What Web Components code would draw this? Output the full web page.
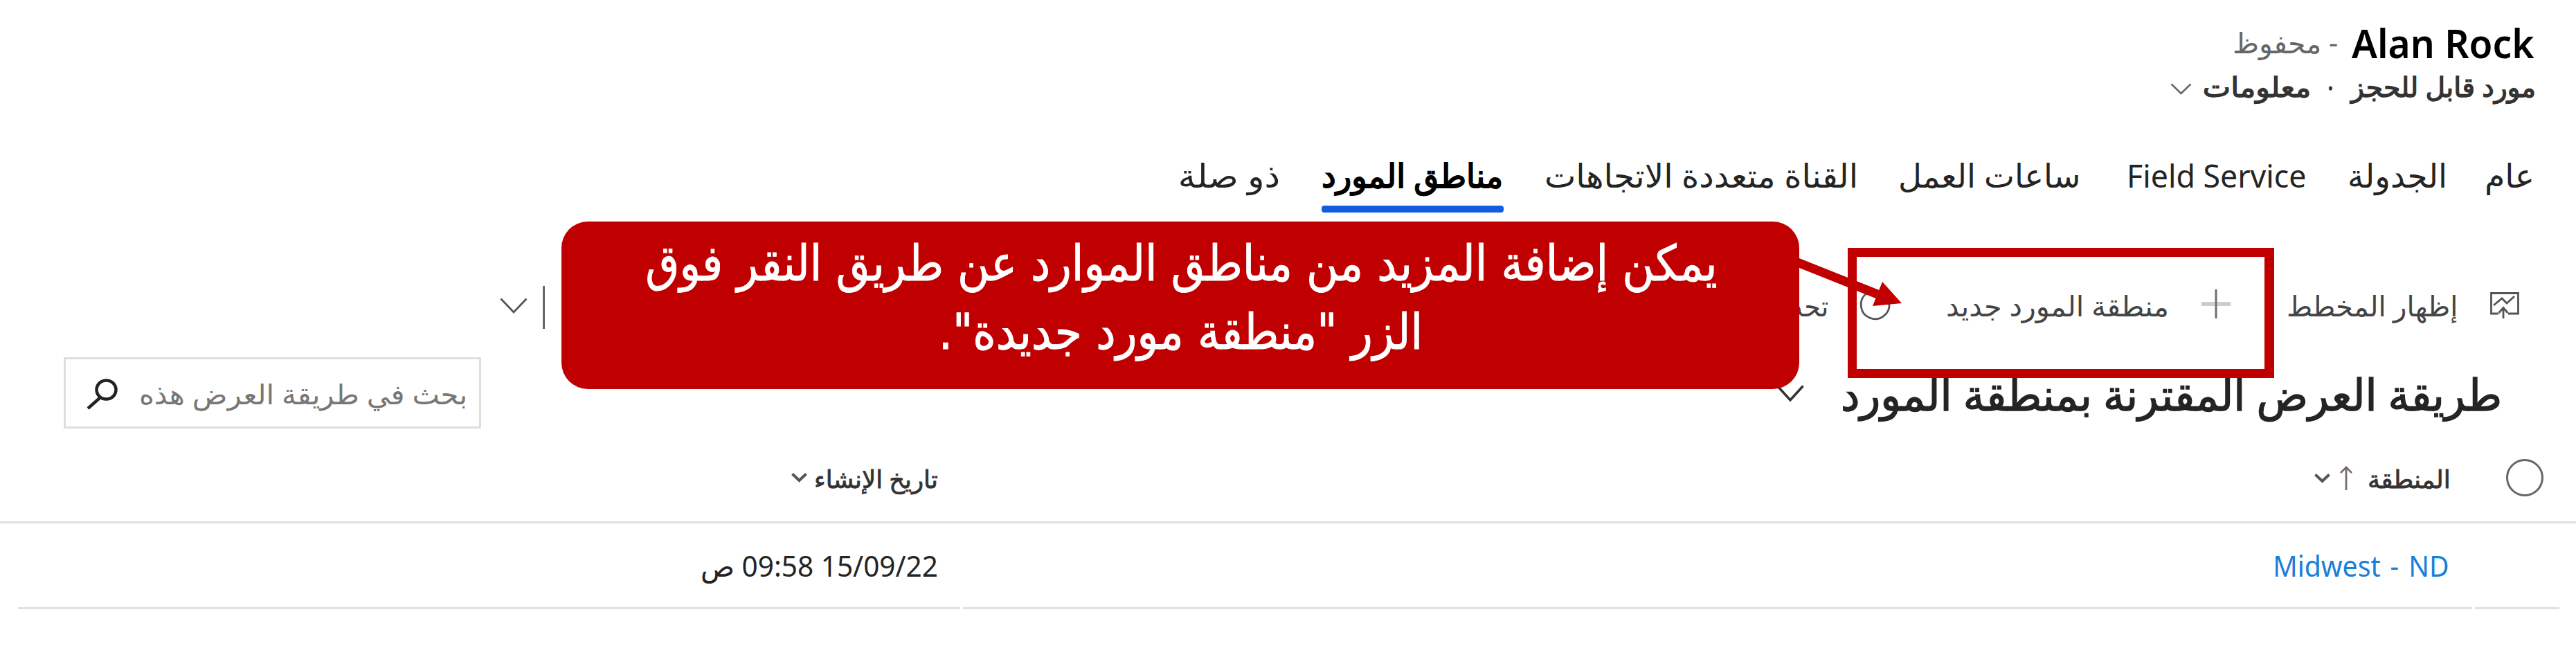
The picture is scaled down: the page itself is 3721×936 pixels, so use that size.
<!DOCTYPE html>
<html lang="ar" dir="rtl">
<head>
<meta charset="utf-8">
<title>Alan Rock</title>
<style>
html,body{margin:0;background:#fff}
body{width:3721px;height:936px;overflow:hidden;font-family:"Noto Sans","DejaVu Sans",sans-serif;color:#242424}
</style>
</head>
<body>
<resource-page></resource-page>
<script>
// One line of text whose ink spans exactly `w` pixels, with its baseline `b` pixels below the row's top.
const ctx = document.createElement('canvas').getContext('2d');
class FitText extends HTMLElement {
  connectedCallback() {
    const fs = +this.getAttribute('fs'), w = +this.getAttribute('w'), b = +this.getAttribute('b');
    const dir = this.getAttribute('dir') || 'rtl';
    const root = this.attachShadow({mode: 'open'});
    root.innerHTML = `<style>
      :host{display:block;flex:none;direction:ltr;width:${w}px;height:${fs}px;line-height:${fs}px;font-size:${fs}px;
        margin-top:${Math.round(b - fs / 2 - 0.388 * fs)}px}
      span{display:inline-block;direction:${dir};white-space:nowrap;transform-origin:0 50%}
    </style><span><slot></slot></span>`;
    const cs = getComputedStyle(this);
    ctx.font = `${cs.fontWeight} ${fs}px ${cs.fontFamily}`;
    ctx.direction = dir; ctx.textAlign = 'left';
    const m = ctx.measureText(this.textContent);
    const s = w / (m.actualBoundingBoxLeft + m.actualBoundingBoxRight);
    root.querySelector('span').style.transform = `translateX(${m.actualBoundingBoxLeft * s}px) scaleX(${s})`;
  }
}
customElements.define('fit-text', FitText);

class UiIcon extends HTMLElement {
  connectedCallback() {
    const n = this.getAttribute('name'), w = +this.getAttribute('w'), h = +this.getAttribute('h');
    const sw = this.getAttribute('sw') || 3;
    const art = {
      chevron: `<path d="M1.5 1.5 L${w / 2} ${h - 2} L${w - 1.5} 1.5"/>`,
      plus: `<path d="M0 ${h / 2}H${w}" stroke="#cfcbd2" stroke-width="6"/><path d="M${w / 2} 0V${h}" stroke="#776f66"/>`,
      ring: `<ellipse cx="${w / 2}" cy="${h / 2}" rx="${w / 2 - 1.5}" ry="${h / 2 - 1.5}"/>`,
      refresh: `<path d="M9 11 A20.500 20.500 0 1 0 42 25"/>`,
      bar: `<path d="M1.500 0V${h}"/>`,
      up: `<path d="M${w / 2} ${h}V2 M1 10 L${w / 2} 2 L${w - 1} 10"/>`,
      chart: `<path d="M13 32H2.500V2.500H41.500V32H27"/><path d="M6 20 L18 10 L25 17 L36 7"/><path d="M20 39V24 M13.500 31 L20 23.500 L26.500 31"/>`,
      search: `<ellipse cx="29.500" cy="16" rx="14" ry="13.500"/><path d="M21 27 L3 43"/>`
    }[n];
    this.attachShadow({mode: 'open'}).innerHTML = `<style>
      :host{display:block;flex:none;width:${w}px;height:${h}px}
      svg{display:block;overflow:visible}</style>
      <svg width="${w}" height="${h}" viewBox="0 0 ${w} ${h}" fill="none" stroke="currentColor" stroke-width="${sw}">${art}</svg>`;
  }
}
customElements.define('ui-icon', UiIcon);

class UiRow extends HTMLElement {
  connectedCallback() {
    this.attachShadow({mode: 'open'}).innerHTML = `<style>
      :host{display:flex;align-items:flex-start;box-sizing:border-box;height:${this.getAttribute('h')}px}
      ::slotted(*){margin-right:var(--g,0px)}
      ::slotted(ui-icon),::slotted(search-box){margin-top:var(--t,0px)}
    </style><slot></slot>`;
  }
}
customElements.define('ui-row', UiRow);

class UiTab extends HTMLElement {
  connectedCallback() {
    this.attachShadow({mode: 'open'}).innerHTML = `<style>
      :host{display:block;flex:none;position:relative}
      :host([active]){color:#000;-webkit-text-stroke:1.8px #000}
      .box{display:flex}
      :host([active])::after{content:"";position:absolute;left:-2px;right:-4px;top:127px;height:10px;border-radius:4px;background:#135ce0}
    </style><div class="box"><slot></slot></div>`;
  }
}
customElements.define('ui-tab', UiTab);

class SearchBox extends HTMLElement {
  connectedCallback() {
    this.attachShadow({mode: 'open'}).innerHTML = `<style>
      :host{display:flex;align-items:flex-start;flex:none;box-sizing:border-box;width:603px;height:103px;border:3px solid #dedede;padding-right:20px;color:#777}
      ui-icon{margin:28px 33px 0 0;color:#222}
    </style><slot></slot><ui-icon name="search" w="46" h="46" sw="4.500"></ui-icon>`;
  }
}
customElements.define('search-box', SearchBox);

class CallOut extends HTMLElement {
  connectedCallback() {
    this.attachShadow({mode: 'open'}).innerHTML = `<style>
      :host{position:absolute;left:811px;top:320px;width:1788px;height:242px;background:#c00000;border-radius:38px;color:#fff;font-family:"DejaVu Sans",sans-serif;-webkit-text-stroke:1px #fff}
    </style>
    <ui-row h="120"><fit-text style="--g:120px" fs="71" w="1544" b="88">يمكن إضافة المزيد من مناطق الموارد عن طريق النقر فوق</fit-text></ui-row>
    <ui-row h="110"><fit-text style="--g:549px" fs="71" w="688" b="67">الزر "منطقة مورد جديدة".</fit-text></ui-row>`;
  }
}
customElements.define('call-out', CallOut);

class ResourcePage extends HTMLElement {
  connectedCallback() {
    this.attachShadow({mode: 'open'}).innerHTML = `<style>
      :host{display:block;position:relative;width:3721px;height:936px;overflow:hidden;background:#fff}
      .head{border-bottom:3px solid #e3e1df}
      .rule{display:flex;gap:4px;padding:0 24px 0 26px}
      .rule i{height:3px;background:#e3e1df}
      .frame{position:absolute;box-sizing:border-box;left:2669px;top:358px;width:616px;height:188px;border:13px solid #c00000;border-right-width:14px}
      .arrow{position:absolute;left:2590px;top:360px}
    </style>
    <ui-row h="95">
      <fit-text dir="ltr" style="--g:60px;color:#000;font-weight:600" fs="57" w="264" b="85">Alan Rock</fit-text>
      <fit-text style="--g:21px;color:#666" fs="41" w="149" b="77">- محفوظ</fit-text>
    </ui-row>
    <ui-row h="75" style="color:#333;-webkit-text-stroke:1.3px #333">
      <fit-text style="--g:61px" fs="39" w="266" b="45">مورد قابل للحجز</fit-text>
      <fit-text style="--g:25px" fs="37" w="5" b="45">·</fit-text>
      <fit-text style="--g:29px" fs="39" w="151" b="45">معلومات</fit-text>
      <ui-icon style="--g:18px;--t:25px;color:#666" name="chevron" w="31" h="17" sw="2.500"></ui-icon>
    </ui-row>
    <ui-row h="150">
      <ui-tab style="--g:64px"><fit-text fs="47" w="65" b="102">عام</fit-text></ui-tab>
      <ui-tab style="--g:61px"><fit-text fs="47" w="137" b="102">الجدولة</fit-text></ui-tab>
      <ui-tab style="--g:64px"><fit-text dir="ltr" fs="45" w="254" b="101">Field Service</fit-text></ui-tab>
      <ui-tab style="--g:74px"><fit-text fs="47" w="257" b="102">ساعات العمل</fit-text></ui-tab>
      <ui-tab style="--g:65px"><fit-text fs="47" w="447" b="102">القناة متعددة الاتجاهات</fit-text></ui-tab>
      <ui-tab active style="--g:65px"><fit-text fs="47" w="257" b="102">مناطق المورد</fit-text></ui-tab>
      <ui-tab style="--g:64px"><fit-text fs="47" w="142" b="102">ذو صلة</fit-text></ui-tab>
    </ui-row>
    <ui-row h="180" style="color:#444">
      <ui-icon style="--g:82px;--t:101px;color:#555" name="chart" w="43" h="40" sw="2.800"></ui-icon>
      <fit-text style="--g:47px" fs="41" w="244" b="137">إظهار المخطط</fit-text>
      <ui-icon style="--g:83px;--t:98px" name="plus" w="42" h="42"></ui-icon>
      <fit-text style="--g:50px" fs="41" w="317" b="137">منطقة المورد جديد</fit-text>
      <ui-icon style="--g:82px;--t:93px;color:#555" name="refresh" w="44" h="46" sw="2.800"></ui-icon>
      <fit-text style="--g:47px" fs="41" w="100" b="137">تحديث</fit-text>
      <ui-icon style="--g:1753px;--t:93px;color:#666" name="bar" w="3" h="62"></ui-icon>
      <ui-icon style="--g:22px;--t:110px;color:#555" name="chevron" w="40" h="23" sw="2.800"></ui-icon>
    </ui-row>
    <ui-row h="130">
      <fit-text style="--g:111px;-webkit-text-stroke:1.4px #242424" fs="63" w="948" b="93">طريقة العرض المقترنة بمنطقة المورد</fit-text>
      <ui-icon style="--g:56px;--t:56px;color:#333" name="chevron" w="40" h="24" sw="3.500"></ui-icon>
      <search-box style="--g:1871px;--t:16px"><fit-text fs="40" w="469" b="66">بحث في طريقة العرض هذه</fit-text></search-box>
    </ui-row>
    <ui-row class="head" h="126" style="color:#333">
      <ui-icon style="--g:47px;--t:33px;color:#666" name="ring" w="54" h="54"></ui-icon>
      <fit-text style="--g:83px;-webkit-text-stroke:.8px #333" fs="35" w="115" b="75">المنطقة</fit-text>
      <ui-icon style="--g:24px;--t:43px;color:#776d70" name="up" w="18" h="35" sw="2.800"></ui-icon>
      <ui-icon style="--g:14px;--t:54px;color:#555" name="chevron" w="23" h="13" sw="4"></ui-icon>
      <fit-text style="--g:1989px;-webkit-text-stroke:.8px #333" fs="35" w="176" b="75">تاريخ الإنشاء</fit-text>
      <ui-icon style="--g:12px;--t:53px;color:#555" name="chevron" w="23" h="13" sw="4"></ui-icon>
    </ui-row>
    <ui-row h="121">
      <fit-text dir="ltr" style="--g:193px;color:#1a7fd8;word-spacing:4px" fs="41" w="242" b="77">Midwest - ND</fit-text>
      <fit-text style="--g:1933px" fs="42" w="339" b="77">15/09/22 09:58 ص</fit-text>
    </ui-row>
    <div class="rule"><i style="width:122px"></i><i style="width:2180px"></i><i style="flex:1"></i></div>
    <div class="frame"></div>
    <svg class="arrow" width="170" height="100" viewBox="2590 360 170 100" fill="#c00000"><path d="M2594 378 L2712 425" stroke="#c00000" stroke-width="13"/><path d="M2719 407 L2747 438 L2705 442Z"/></svg>
    <call-out></call-out>`;
  }
}
customElements.define('resource-page', ResourcePage);
</script>
</body>
</html>
